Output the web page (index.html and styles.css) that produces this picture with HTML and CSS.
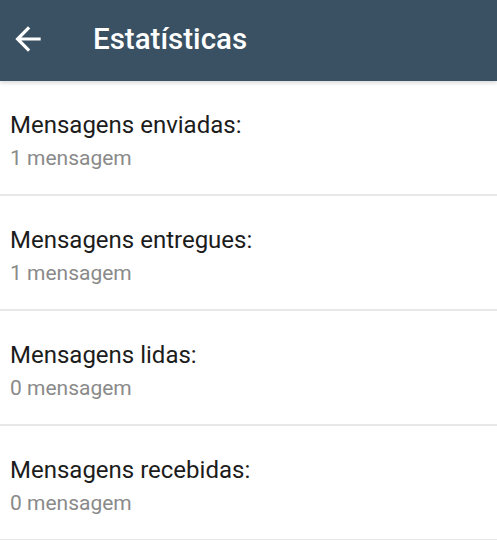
FILE: index.html
```html
<!DOCTYPE html>
<html lang="pt">
<head>
  <meta charset="UTF-8" />
  <meta name="viewport" content="width=device-width, initial-scale=1.0"/>
  <title>Estatísticas</title>
  <link rel="stylesheet" href="styles.css">
</head>
<body>
  <div class="topbar">
    <svg class="back" width="38" height="38" viewBox="0 0 24 24">
      <path d="M20 11H7.83l5.59-5.59L12 4l-8 8 8 8 1.41-1.41L7.83 13H20v-2z" fill="#fff"/>
    </svg>
    <h1>Estatísticas</h1>
  </div>

  <div class="list">
    <div class="row">
      <div class="label">Mensagens enviadas:</div>
      <div class="count">1 mensagem</div>
    </div>
    <div class="row">
      <div class="label">Mensagens entregues:</div>
      <div class="count">1 mensagem</div>
    </div>
    <div class="row">
      <div class="label">Mensagens lidas:</div>
      <div class="count">0 mensagem</div>
    </div>
    <div class="row">
      <div class="label">Mensagens recebidas:</div>
      <div class="count">0 mensagem</div>
    </div>
  </div>
</body>
</html>
```

FILE: styles.css
```css
body {
  margin: 0;
  background-color: #fff;
  font-family: Roboto, "Noto Sans", sans-serif;
}

.topbar {
  height: 81px;
  background-color: #3a5163;
  display: flex;
  align-items: center;
  padding-left: 9px;
  box-shadow: 0 2px 4px rgba(0, 0, 0, 0.15);
  position: relative;
}

.back {
  margin-top: -4px;
}

.topbar h1 {
  margin: -4px 0 0 46px;
  color: #fff;
  font-size: 29.5px;
  font-weight: 500;
}

.row {
  height: 107px;
  padding: 6px 0 0 10px;
  border-bottom: 2px solid #e8e8e8;
  display: flex;
  flex-direction: column;
  justify-content: center;
}

.label {
  font-size: 24px;
  line-height: 30px;
  color: #1c1c1c;
}

.count {
  margin-top: 4px;
  font-size: 21px;
  line-height: 28px;
  color: #8a8a8a;
}
```
